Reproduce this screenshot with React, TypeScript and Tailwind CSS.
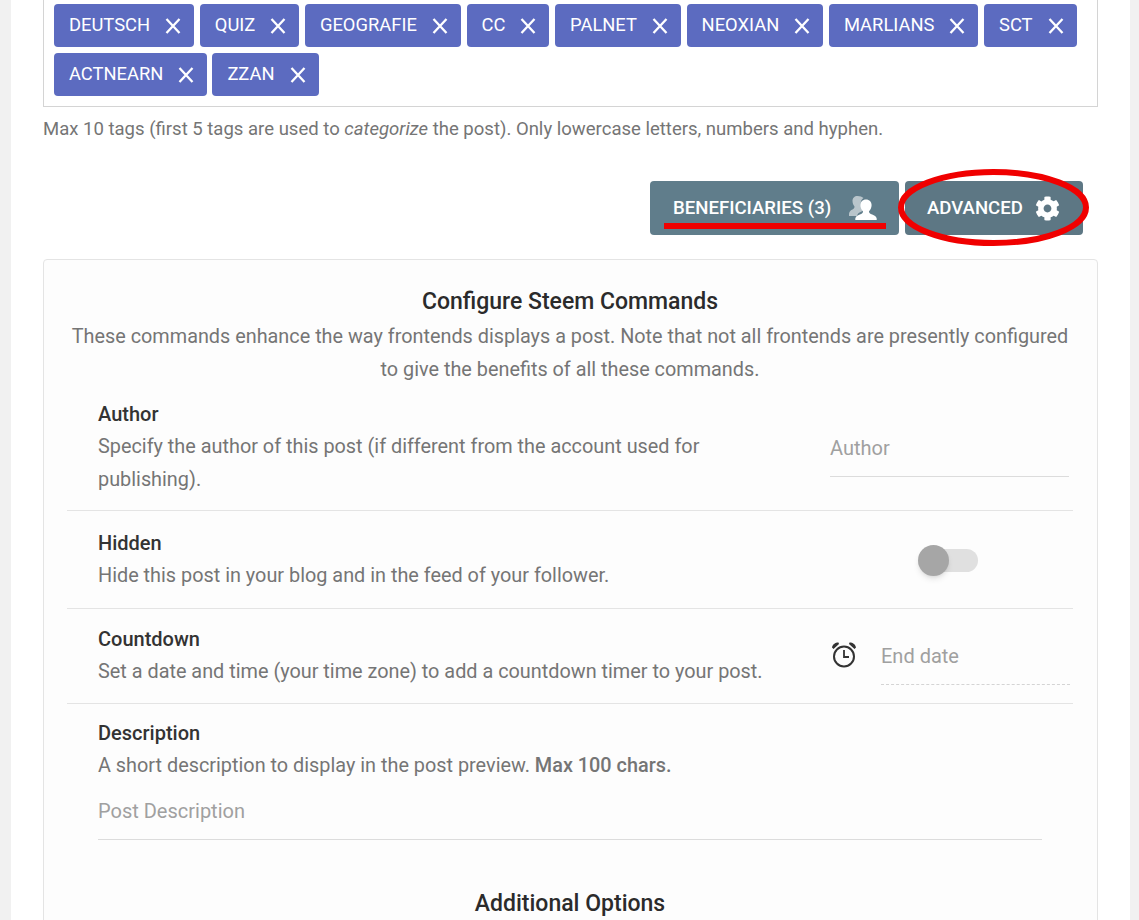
import React from "react";
import { FaCog } from "react-icons/fa";

const tags1 = ["DEUTSCH", "QUIZ", "GEOGRAFIE", "CC", "PALNET", "NEOXIAN", "MARLIANS", "SCT"];
const tags2 = ["ACTNEARN", "ZZAN"];

function Chip({ label }: { label: string }) {
  return (
    <div className="flex h-[43px] items-center rounded-[4px] bg-[#5c6bc0] pl-[15px] pr-[13px] text-[18.350px] text-white">
      <span className="mt-[-2px]">{label}</span>
      <svg className="ml-[15px] h-[16px] w-[16px]" viewBox="0 0 16 16" fill="none" stroke="white" strokeWidth="2.300">
        <path d="M1.500 1 14.500 15M14.500 1 1.500 15" />
      </svg>
    </div>
  );
}

function BenefIcon() {
  return (
    <svg className="h-[26px] w-[28px]" viewBox="0 0 28 26">
      <path fill="#b9c5cb" d="M8.500 1C5.500 1 3.500 3 3.500 6c0 2 .8 4 2 5.500 0 2-1 2.500-2.500 3.200-1.500.7-2.600 1.800-3 4V21h8c.5-2.500 2.500-3.800 4.500-4.500 1-.4 1.500-.8 1.500-2-1.500-1.500-2.300-3.800-2.300-6 0-2.500 1-4.500 2.800-5.500C13 1.800 11 1 8.500 1z" />
      <path fill="white" d="M17 4.500c-3.400 0-5.600 2.300-5.600 5.600 0 2.500 1 4.900 2.600 6.200 0 1.900-1 2.500-3.200 3.300-2.200.8-4 1.800-4.500 3.900V25H27.700v-1.500c-.5-2.100-2.300-3.100-4.500-3.900-2.200-.8-3.200-1.400-3.200-3.300 1.600-1.300 2.600-3.700 2.600-6.200C22.600 6.800 20.400 4.500 17 4.500z" />
    </svg>
  );
}

function AlarmIcon() {
  return (
    <svg className="h-[28px] w-[26px]" viewBox="0 0 26 28" fill="none">
      <circle cx="13" cy="15.500" r="10" stroke="#333" strokeWidth="2" />
      <path d="M13 9v7h5" stroke="#333" strokeWidth="1.800" />
      <path fill="#333" d="M1 6.500C1.500 3.500 4 1.500 7.500 1.500L8 3 2.500 8zM25 6.500C24.500 3.500 22 1.500 18.500 1.500L18 3l5.500 5z" />
    </svg>
  );
}

export default function App() {
  return (
    <div className="relative h-[920px] w-full overflow-hidden bg-[#f1f1f1] font-['Roboto',sans-serif]">
      <div className="mx-[11px] h-full w-[1119px] bg-white px-[32px]">
        <div className="flex h-[107px] w-[1055px] flex-col gap-[6px] border-x border-b border-[#d4d4d4] pl-[10px] pt-[4px]">
          <div className="flex gap-[5.700px]">
            {tags1.map((t) => (
              <Chip key={t} label={t} />
            ))}
          </div>
          <div className="flex gap-[5px]">
            {tags2.map((t) => (
              <Chip key={t} label={t} />
            ))}
          </div>
        </div>

        <p className="mt-[10px] whitespace-nowrap text-[18.550px] leading-[24px] text-[#757575]">
          Max 10 tags (first 5 tags are used to <em>categorize</em> the post). Only lowercase letters, numbers and hyphen.
        </p>

        <div className="mt-[40px] flex justify-end gap-[6px] pr-[15px]">
          <button className="relative flex h-[54px] w-[249px] items-center justify-between rounded-[4px] bg-[#607d8b] pl-[23px] pr-[22px] text-[18.600px] font-medium text-white">
            <span className="mt-[2px]">BENEFICIARIES (3)</span>
            <BenefIcon />
            <span className="absolute left-[14px] top-[42px] h-[6px] w-[222px] bg-[#f00000]" />
          </button>
          <button className="flex h-[54px] w-[178px] items-center justify-between rounded-[4px] bg-[#5d7784] pl-[22px] pr-[23px] text-[18.600px] font-medium text-white">
            <span className="mt-[2px]">ADVANCED</span>
            <FaCog className="h-[25px] w-[25px] text-white" />
          </button>
        </div>

        <div className="mt-[24px] h-[700px] w-[1055px] rounded-[4px] border border-[#e4e4e4] bg-[#fdfdfd] pl-[23px] pr-[24px] pt-[26px]">
          <h2 className="text-center text-[23px] font-medium leading-[32px] text-[#2b2b2b]">Configure Steem Commands</h2>
          <p className="mt-[2px] whitespace-nowrap text-center text-[19.830px] leading-[33px] text-[#757575]">
            These commands enhance the way frontends displays a post. Note that not all frontends are presently configured
            <br />
            to give the benefits of all these commands.
          </p>

          <div className="mt-[10px] flex h-[115px] border-b border-[#e4e4e4] pl-[31px] pt-[4px]">
            <div className="w-[732px]">
              <div className="mb-[2px] text-[20px] font-medium leading-[28px] text-[#333]">Author</div>
              <div className="w-[640px] text-[19.850px] leading-[33px] text-[#757575]">
                Specify the author of this post (if different from the account used for publishing).
              </div>
            </div>
            <div className="flex h-[77px] w-[239px] items-center border-b border-[#dcdcdc] pt-[20px] text-[20px] text-[#a0a0a0]">
              Author
            </div>
          </div>

          <div className="flex h-[98px] justify-between border-b border-[#e4e4e4] pl-[31px] pt-[18px]">
            <div>
              <div className="mb-[2px] text-[20px] font-medium leading-[28px] text-[#333]">Hidden</div>
              <div className="text-[19.850px] leading-[33px] text-[#757575]">Hide this post in your blog and in the feed of your follower.</div>
            </div>
            <div className="relative mr-[95px] mt-[20px] h-[23px] w-[45px] rounded-full bg-[#e0e0e0]">
              <span className="absolute left-[-15px] top-[-4.500px] h-[31px] w-[31px] rounded-full bg-[#a6a6a6] shadow-md" />
            </div>
          </div>

          <div className="flex h-[95px] border-b border-[#e4e4e4] pl-[31px] pt-[16px]">
            <div className="w-[732px]">
              <div className="mb-[2px] text-[20px] font-medium leading-[28px] text-[#333]">Countdown</div>
              <div className="text-[19.850px] leading-[33px] text-[#757575]">Set a date and time (your time zone) to add a countdown timer to your post.</div>
            </div>
            <div className="ml-[1px] mt-[16px]">
              <AlarmIcon />
            </div>
            <div className="ml-[24px] flex h-[60px] w-[189px] items-center border-b border-dashed border-[#d4d4d4] pt-[2px] text-[20px] text-[#a0a0a0]">
              End date
            </div>
          </div>

          <div className="pl-[31px] pt-[15px]">
            <div className="mb-[2px] text-[20px] font-medium leading-[28px] text-[#333]">Description</div>
            <div className="text-[19.850px] leading-[33px] text-[#757575]">
              A short description to display in the post preview. <span className="font-medium">Max 100 chars.</span>
            </div>
            <div className="mt-[13px] flex h-[45px] w-[944px] items-start border-b border-[#dcdcdc] text-[20px] leading-[33px] text-[#a0a0a0]">
              Post Description
            </div>
          </div>

          <h2 className="mt-[48px] text-center text-[23px] font-medium leading-[32px] text-[#2b2b2b]">Additional Options</h2>
        </div>
      </div>

      <svg className="pointer-events-none absolute left-[893px] top-[165px] h-[85px] w-[200px]" viewBox="0 0 200 85" fill="none">
        <ellipse cx="100.500" cy="42.500" rx="92.500" ry="35.500" stroke="#f00000" strokeWidth="6" />
      </svg>
    </div>
  );
}
